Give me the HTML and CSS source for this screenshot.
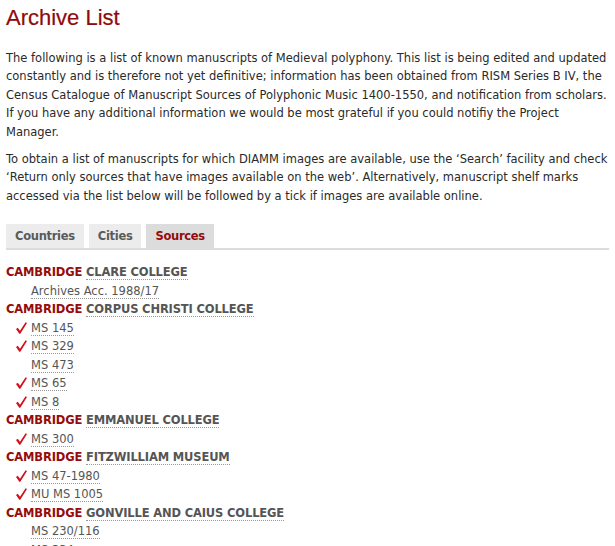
FILE: index.html
```html
<!DOCTYPE html>
<html>
<head>
<meta charset="utf-8">
<link rel="stylesheet" href="styles.css">
</head>
<body>
<h1 class="title">Archive List</h1>
<p class="intro">The following is a list of known manuscripts of Medieval polyphony. This list is being edited and updated constantly and is therefore not yet definitive; information has been obtained from RISM Series B IV, the Census Catalogue of Manuscript Sources of Polyphonic Music 1400-1550, and notification from scholars. If you have any additional information we would be most grateful if you could notifiy the Project Manager.</p>
<p class="intro last">To obtain a list of manuscripts for which DIAMM images are available, use the ‘Search’ facility and check ‘Return only sources that have images available on the web’. Alternatively, manuscript shelf marks accessed via the list below will be followed by a tick if images are available online.</p>
<div class="tabs">
  <span class="tab">Countries</span>
  <span class="tab">Cities</span>
  <span class="tab active">Sources</span>
</div>
<ul class="archive">
  <li class="place"><span class="city">CAMBRIDGE</span> <a class="inst">CLARE COLLEGE</a></li>
  <li class="item"><a class="ms">Archives Acc. 1988/17</a></li>
  <li class="place"><span class="city">CAMBRIDGE</span> <a class="inst">CORPUS CHRISTI COLLEGE</a></li>
  <li class="item ticked"><a class="ms">MS 145</a></li>
  <li class="item ticked"><a class="ms">MS 329</a></li>
  <li class="item"><a class="ms">MS 473</a></li>
  <li class="item ticked"><a class="ms">MS 65</a></li>
  <li class="item ticked"><a class="ms">MS 8</a></li>
  <li class="place"><span class="city">CAMBRIDGE</span> <a class="inst">EMMANUEL COLLEGE</a></li>
  <li class="item ticked"><a class="ms">MS 300</a></li>
  <li class="place"><span class="city">CAMBRIDGE</span> <a class="inst">FITZWILLIAM MUSEUM</a></li>
  <li class="item ticked"><a class="ms">MS 47-1980</a></li>
  <li class="item ticked"><a class="ms">MU MS 1005</a></li>
  <li class="place"><span class="city">CAMBRIDGE</span> <a class="inst">GONVILLE AND CAIUS COLLEGE</a></li>
  <li class="item"><a class="ms">MS 230/116</a></li>
  <li class="item"><a class="ms">MS 334</a></li>
</ul>
</body>
</html>
```

FILE: styles.css
```css
html, body {
  margin: 0;
  padding: 0;
  background: #fff;
}
body {
  padding: 0 6px;
  font-family: "DejaVu Sans", Verdana, sans-serif;
  font-size: 11.5px;
  line-height: 18.4px;
  color: #2a2a2a;
}
.title {
  font-family: "Liberation Sans", Arial, sans-serif;
  font-weight: normal;
  font-size: 22px;
  line-height: 26px;
  color: #8e0b0b;
  margin: 5px 0 18px;
  -webkit-text-stroke: 0.2px #8e0b0b;
}
.intro {
  margin: 0 0 9px;
}
.intro.last {
  margin-bottom: 19px;
}
.tabs {
  display: flex;
  gap: 5px;
  border-bottom: 2px solid #dcdcdc;
}
.tab {
  display: block;
  height: 24px;
  line-height: 24px;
  padding: 0 9px;
  background: #ececec;
  font-weight: bold;
  letter-spacing: -0.3px;
  color: #5a5a5a;
}
.tab.active {
  background: #dcdcdc;
  color: #960b0b;
}
.archive {
  list-style: none;
  margin: 13px 0 0;
  padding: 0;
}
.archive li {
  line-height: 18.5px;
  height: 18.5px;
}
.place {
  font-weight: bold;
  letter-spacing: -0.15px;
}
.city {
  color: #960b0b;
}
.inst {
  color: #555;
  border-bottom: 1px dotted #999;
}
.item {
  position: relative;
  padding-left: 25px;
}
.ms {
  color: #555;
  border-bottom: 1px dotted #999;
}
.item.ticked::before {
  content: "";
  position: absolute;
  left: 10px;
  top: 3px;
  width: 11px;
  height: 12px;
  background: url("data:image/svg+xml;utf8,<svg xmlns='http://www.w3.org/2000/svg' width='11' height='12' viewBox='0 0 11 12'><path d='M0 7 L1.8 5.7 L4 8.7 L9.6 0.2 L11 1.1 L4.3 11.8 L3.3 11.8 Z' fill='%23d0101b'/></svg>") no-repeat;
}
```
